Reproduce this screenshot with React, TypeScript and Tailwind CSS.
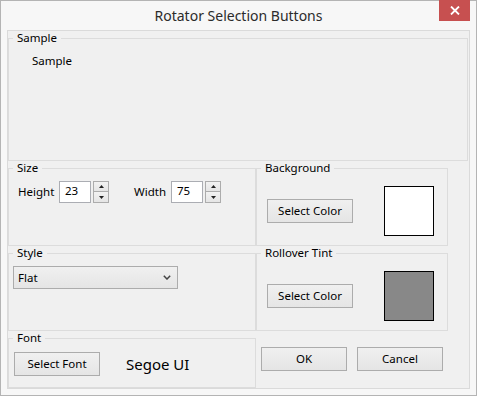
import React from "react";

const btn =
  "flex items-center justify-center border border-[#acacac] bg-linear-to-b from-[#f0f0f0] to-[#e5e5e5] text-[11.5px] text-black";

function Group({ title, className, children }: { title: string; className?: string; children?: React.ReactNode }) {
  return (
    <fieldset className={`border border-[#dcdcdc] ${className ?? ""}`}>
      <legend className="ml-[4px] px-[4px] text-[11.5px] leading-[14px] text-black">{title}</legend>
      {children}
    </fieldset>
  );
}

function Spinner() {
  return (
    <div className="ml-[2px] flex h-[22px] w-[16px] flex-col">
      <div className="flex h-[11px] items-center justify-center border border-[#acacac] bg-linear-to-b from-[#f2f2f2] to-[#e5e5e5]">
        <svg width="5" height="3" viewBox="0 0 5 3"><path d="M2.5 0 L5 3 L0 3 Z" fill="#222" /></svg>
      </div>
      <div className="flex h-[11px] items-center justify-center border border-t-0 border-[#acacac] bg-linear-to-b from-[#f2f2f2] to-[#e5e5e5]">
        <svg width="5" height="3" viewBox="0 0 5 3"><path d="M0 0 L5 0 L2.5 3 Z" fill="#222" /></svg>
      </div>
    </div>
  );
}

function NumBox({ value }: { value: string }) {
  return (
    <div className="h-[22px] w-[32px] border border-[#abadb3] bg-white pl-[5px] text-[11.5px] leading-[18px] text-black">
      {value}
    </div>
  );
}

export default function App() {
  return (
    <div
      className="flex h-[396px] w-[477px] flex-col border border-[#b4b4b4] bg-[#f7f7f7]"
      style={{ fontFamily: '"Noto Sans", "Open Sans", sans-serif' }}
    >
      {/* title bar */}
      <div className="relative flex h-[29px] items-center justify-center">
        <span className="text-[14px] text-[#2b2b2b]">Rotator Selection Buttons</span>
        <div className="absolute right-[6px] top-[-1px] flex h-[21px] w-[31px] items-center justify-center bg-[#c75050]">
          <svg width="10" height="9" viewBox="0 0 10 9">
            <path d="M1 0.5 L9 8.5 M9 0.5 L1 8.5" stroke="#fff" strokeWidth="1.8" />
          </svg>
        </div>
      </div>

      {/* client area */}
      <div className="mx-[6px] mb-[6px] flex flex-1 flex-col border border-[#dadada] bg-[#f0f0f0]">
        <Group title="Sample" className="mr-[1px] h-[130px]">
          <div className="pl-[23px] pt-[8px] text-[11.5px] leading-[16px] text-black">Sample</div>
        </Group>

        <div className="grid grid-cols-[248px_192px] grid-rows-[85px_85px_57px]">
          <Group title="Size">
            <div className="flex items-center pl-[9px] pt-[6px] text-[11.5px] text-black">
              <span className="w-[41px]">Height</span>
              <NumBox value="23" />
              <Spinner />
              <span className="ml-[25px] w-[37px]">Width</span>
              <NumBox value="75" />
              <Spinner />
            </div>
          </Group>

          <Group title="Background">
            <div className="flex items-center pl-[10px] pt-[11px]">
              <div className={`${btn} h-[24px] w-[86px]`}>Select Color</div>
              <div className="ml-[31px] h-[50px] w-[50px] border border-black bg-white" />
            </div>
          </Group>

          <Group title="Style">
            <div className="pl-[4px] pt-[6px]">
              <div className={`${btn} h-[23px] w-[165px] !justify-between px-[4px]`}>
                <span>Flat</span>
                <svg width="8" height="5" viewBox="0 0 8 5" className="mr-[2px]">
                  <path d="M0.8 0.8 L4 4 L7.2 0.8" stroke="#444" strokeWidth="1.5" fill="none" />
                </svg>
              </div>
            </div>
          </Group>

          <Group title="Rollover Tint">
            <div className="flex items-center pl-[10px] pt-[11px]">
              <div className={`${btn} h-[24px] w-[86px]`}>Select Color</div>
              <div className="ml-[31px] h-[50px] w-[50px] border border-black bg-[#888888]" />
            </div>
          </Group>

          <Group title="Font">
            <div className="flex items-center pl-[5px] pt-[7px]">
              <div className={`${btn} h-[24px] w-[86px]`}>Select Font</div>
              <span className="ml-[26px] text-[15px] text-black">Segoe UI</span>
            </div>
          </Group>

          <div className="flex gap-[10px] pl-[5px] pt-[16px]">
            <div className={`${btn} h-[24px] w-[86px]`}>OK</div>
            <div className={`${btn} h-[24px] w-[86px]`}>Cancel</div>
          </div>
        </div>
      </div>
    </div>
  );
}
